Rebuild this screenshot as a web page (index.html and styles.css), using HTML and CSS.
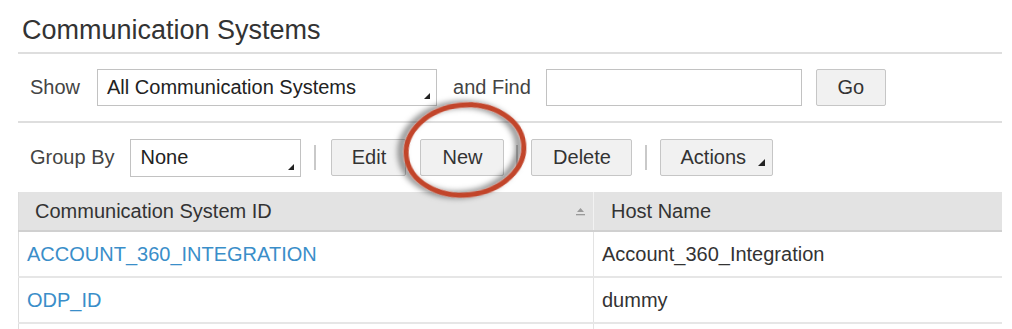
FILE: index.html
```html
<!DOCTYPE html>
<html>
<head>
<meta charset="utf-8">
<link rel="stylesheet" href="styles.css">
</head>
<body>
<div class="page">
  <h1 class="title">Communication Systems</h1>

  <div class="toolbar toolbar-show">
    <span class="label">Show</span>
    <div class="dropdown dropdown-show">
      <span>All Communication Systems</span>
      <svg class="caret" width="6" height="6" viewBox="0 0 6 6"><polygon points="6,0 6,6 0,6" fill="#222"/></svg>
    </div>
    <span class="label">and Find</span>
    <div class="search"></div>
    <button class="btn btn-go">Go</button>
  </div>

  <div class="toolbar toolbar-group">
    <span class="label">Group By</span>
    <div class="dropdown dropdown-group">
      <span>None</span>
      <svg class="caret" width="6" height="6" viewBox="0 0 6 6"><polygon points="6,0 6,6 0,6" fill="#222"/></svg>
    </div>
    <span class="sep"></span>
    <button class="btn btn-edit">Edit</button>
    <button class="btn btn-new">New</button>
    <span class="sep"></span>
    <button class="btn btn-delete">Delete</button>
    <span class="sep"></span>
    <button class="btn btn-actions">Actions
      <svg class="caret-btn" width="7" height="7" viewBox="0 0 7 7"><polygon points="7,0 7,7 0,7" fill="#222"/></svg>
    </button>
  </div>

  <table class="grid">
    <thead>
      <tr>
        <th class="col-id">
          <div class="th-inner">
            <span>Communication System ID</span>
            <svg class="sort" width="9" height="8" viewBox="0 0 9 8"><polygon points="4.5,0 8,4 1,4" fill="#9a9a9a"/><rect x="0" y="6" width="9" height="1.3" fill="#9a9a9a"/></svg>
          </div>
        </th>
        <th class="col-host">Host Name</th>
      </tr>
    </thead>
    <tbody>
      <tr>
        <td class="col-id"><a class="link" href="#">ACCOUNT_360_INTEGRATION</a></td>
        <td class="col-host">Account_360_Integration</td>
      </tr>
      <tr>
        <td class="col-id"><a class="link" href="#">ODP_ID</a></td>
        <td class="col-host">dummy</td>
      </tr>
      <tr>
        <td class="col-id">&nbsp;</td>
        <td class="col-host">&nbsp;</td>
      </tr>
    </tbody>
  </table>

  <svg class="highlight" width="1012" height="329" viewBox="0 0 1012 329">
    <defs>
      <filter id="shadow" x="-30%" y="-30%" width="160%" height="160%">
        <feDropShadow dx="-5" dy="-1" stdDeviation="3" flood-color="#000" flood-opacity="0.6"/>
      </filter>
    </defs>
    <ellipse cx="465" cy="150" rx="59" ry="45" transform="rotate(-6 465 150)" fill="none" stroke="#c2452c" stroke-width="5" filter="url(#shadow)"/>
  </svg>
</div>
</body>
</html>
```

FILE: styles.css
```css
* {
  box-sizing: border-box;
}

body {
  margin: 0;
  background: #ffffff;
  font-family: "Liberation Sans", Arial, sans-serif;
  color: #333333;
}

.page {
  position: relative;
  width: 1002px;
  padding-left: 18px;
  height: 329px;
  overflow: hidden;
}

.title {
  margin: 0;
  padding: 14px 0 6px 4px;
  font-size: 27px;
  line-height: 32px;
  font-weight: normal;
  color: #333333;
  border-bottom: 2px solid #dedede;
}

.toolbar {
  display: flex;
  align-items: center;
  padding-left: 12px;
}

.toolbar-show {
  height: 69px;
  border-bottom: 2px solid #dedede;
}

.toolbar-group {
  height: 69px;
}

.label {
  font-size: 20px;
  color: #444444;
}

.dropdown {
  display: flex;
  justify-content: space-between;
  align-items: center;
  border: 1px solid #c2c2c2;
  background: #ffffff;
  font-size: 20px;
  color: #222222;
  padding-left: 9px;
  padding-right: 6px;
}

.dropdown .caret {
  align-self: flex-end;
  margin-bottom: 6px;
}

.dropdown-show {
  width: 340px;
  height: 37px;
  margin-left: 17px;
  margin-right: 16px;
}

.search {
  width: 256px;
  height: 37px;
  border: 1px solid #c2c2c2;
  margin-left: 15px;
  margin-right: 14px;
}

.btn {
  height: 37px;
  border: 1px solid #c6c6c6;
  border-radius: 2px;
  background: #f1f1f1;
  font-family: "Liberation Sans", Arial, sans-serif;
  font-size: 20px;
  color: #333333;
  padding: 0 20px;
  cursor: pointer;
}

.btn-go {
  width: 70px;
  padding: 0;
}

.dropdown-group {
  width: 171px;
  height: 38px;
  margin-left: 16px;
  margin-right: 13px;
}

.sep {
  width: 2px;
  height: 25px;
  background: #c9c9c9;
}

.btn-edit {
  width: 75px;
  margin-left: 15px;
  padding: 0;
}

.btn-new {
  width: 84px;
  margin-left: 14px;
  margin-right: 12px;
  padding: 0;
}

.btn-delete {
  width: 101px;
  margin-left: 13px;
  margin-right: 13px;
  padding: 0;
}

.btn-actions {
  width: 113px;
  margin-left: 13px;
  padding: 0 7px 0 19px;
  display: flex;
  align-items: center;
  justify-content: space-between;
}

.caret-btn {
  align-self: flex-end;
  margin-bottom: 9px;
}

.grid {
  width: 984px;
  border-collapse: collapse;
  border-left: 1px solid #dddddd;
  font-size: 20px;
}

.grid th {
  height: 39px;
  background: #e3e3e3;
  border-bottom: 2px solid #d0d0d0;
  font-weight: normal;
  text-align: left;
  color: #333333;
  padding: 0;
}

.grid th.col-id {
  width: 575px;
  padding-left: 16px;
  padding-right: 8px;
}

.grid th.col-host {
  padding-left: 17px;
  border-left: 1px solid #f2f2f2;
}

.th-inner {
  display: flex;
  justify-content: space-between;
  align-items: center;
}

.sort {
  margin-top: 2px;
}

.grid td {
  height: 46px;
  border-bottom: 2px solid #e6e6e6;
  padding: 0;
  color: #333333;
}

.grid td.col-id {
  padding-left: 8px;
}

.grid td.col-host {
  padding-left: 8px;
  border-left: 1px solid #e3e3e3;
}

.link {
  color: #3a8ec9;
  text-decoration: none;
}

.highlight {
  position: absolute;
  left: 0;
  top: 0;
  pointer-events: none;
}
```
